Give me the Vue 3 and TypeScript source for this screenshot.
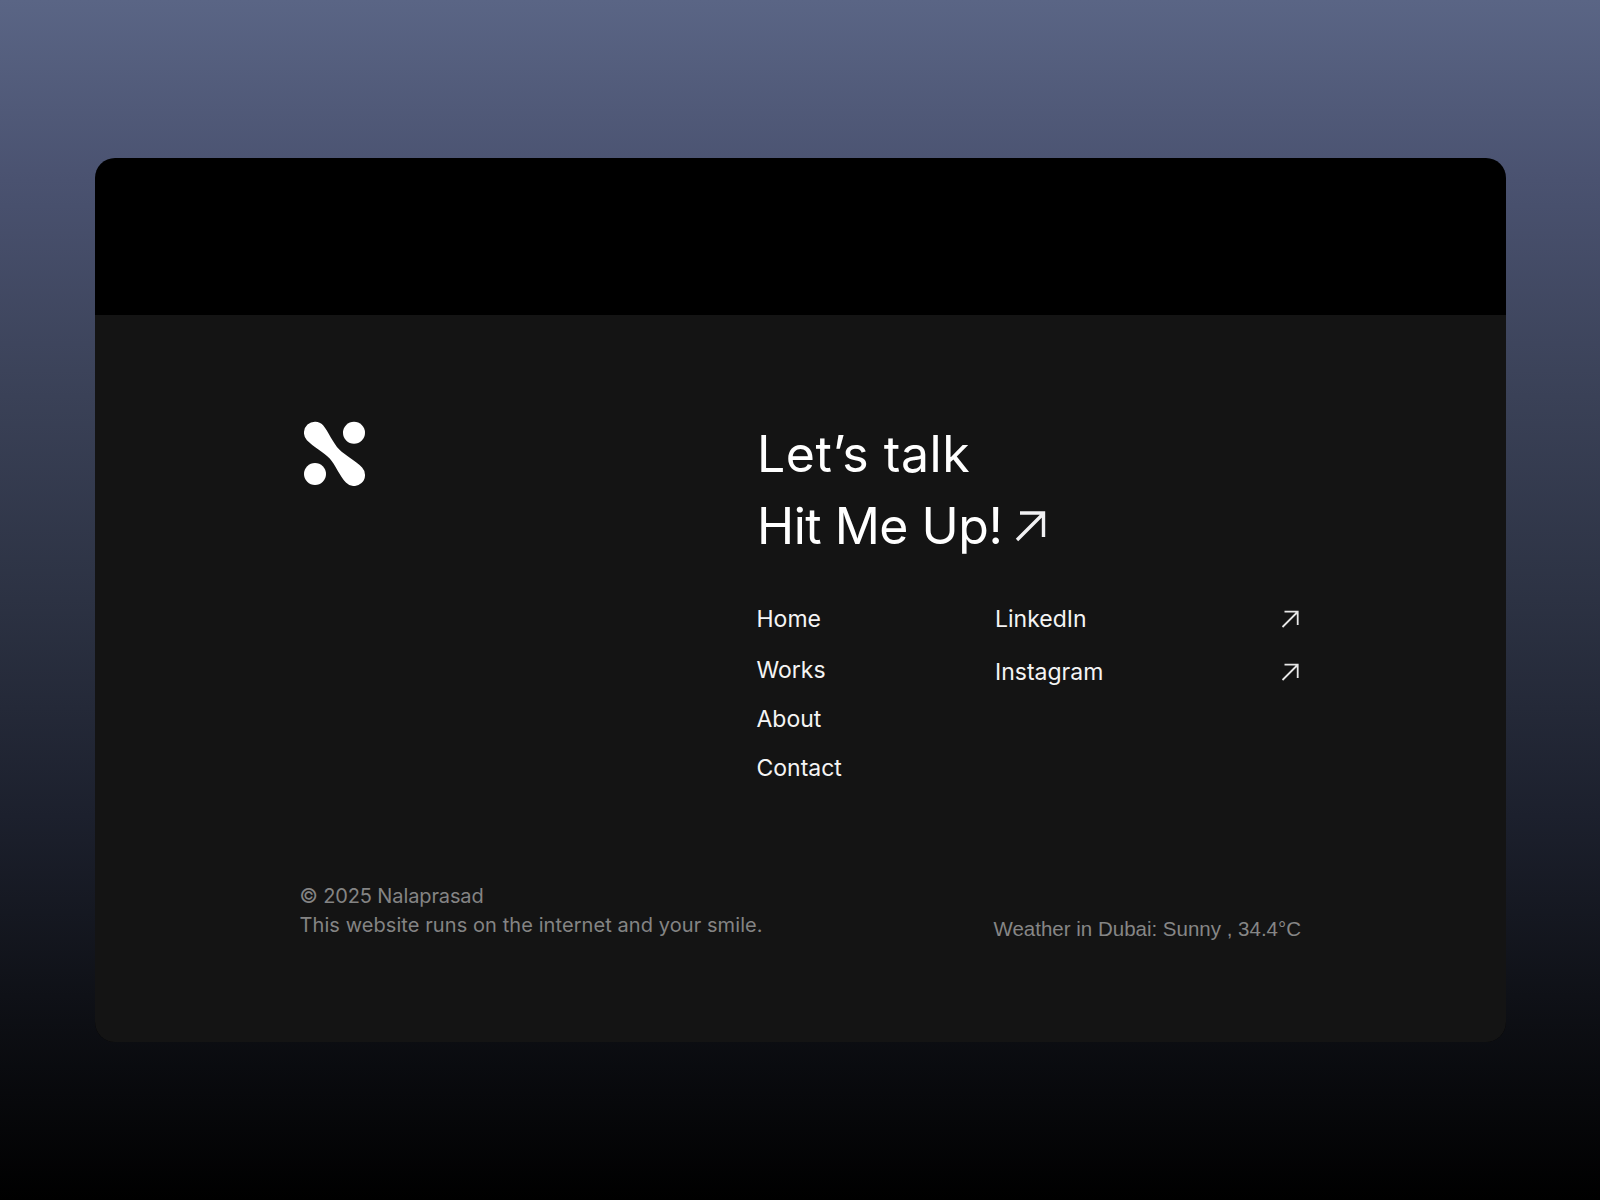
<script setup lang="ts">
const pages: string[] = ['Home', 'Works', 'About', 'Contact']
const socials: string[] = ['LinkedIn', 'Instagram']
</script>

<template>
  <div class="page">
    <div class="card">
      <div class="top"></div>
      <footer class="footer">
        <div class="main">
          <svg class="logo" viewBox="0 0 62 65" width="62" height="65">
            <circle cx="11" cy="53" r="11" fill="#fff" />
            <circle cx="50" cy="11.7" r="11" fill="#fff" />
            <path d="M19.1 4.2 C24 10 29 22 35.3 28.6 C41 34.5 52 40 58.1 46.5 A11 11 0 0 1 41.9 61.5 C36 55.5 31 43 25.7 37.4 C20 31.5 9 25.5 2.9 19.2 A11 11 0 0 1 19.1 4.2 Z" fill="#fff" />
          </svg>
          <div class="right">
            <h2 class="talk lets">Let’s talk</h2>
            <div class="talk hit">
              <span>Hit Me Up!</span>
              <svg class="big" viewBox="0 0 32 32" width="32" height="32">
                <path d="M3 30 L29 4 M6 3 H29.5 V27" stroke="#f1f1f3" stroke-width="3.4" fill="none" />
              </svg>
            </div>
            <div class="links">
              <nav class="pages">
                <a v-for="p in pages" :key="p">{{ p }}</a>
              </nav>
              <div class="socials">
                <a v-for="s in socials" :key="s" class="social">
                  <span>{{ s }}</span>
                  <svg class="small" viewBox="0 0 18 18" width="18" height="18">
                    <path d="M1.5 17 L16.5 2 M3.5 1.7 H16.7 V15" stroke="#e8e8e8" stroke-width="1.8" fill="none" />
                  </svg>
                </a>
              </div>
            </div>
          </div>
        </div>
        <div class="bottom">
          <p class="copy">
            <span class="line first">© 2025 Nalaprasad</span>
            <span class="line second">This website runs on the internet and your smile.</span>
          </p>
          <p class="weather">Weather in Dubai: Sunny , 34.4°C</p>
        </div>
      </footer>
    </div>
  </div>
</template>

<style>
html, body { margin: 0; background: #000; }
</style>

<style scoped>
.page {
  height: 1200px;
  box-sizing: border-box;
  padding: 158px 0 0 95px;
  background: linear-gradient(180deg, #5a6585 0%, #4a5270 15%, #3a4157 33%, #2c3243 50%, #1c202d 68%, #0f1117 83%, #000 100%);
  font-family: Inter, "Noto Sans", sans-serif;
}
.card {
  width: 1411px;
  height: 884px;
  border-radius: 20px;
  overflow: hidden;
  background: #000;
}
.top { height: 157px; }
.footer {
  height: 727px;
  box-sizing: border-box;
  padding: 106px 205px 0 205px;
  background: #141414;
}
.main { display: flex; }
.logo { margin-left: 4px; flex: none; }
.right { margin-left: 391px; width: 544px; margin-top: -3px; }
.talk {
  margin: 0;
  font-size: 50px;
  line-height: 72px;
  font-weight: 400;
  color: #fff;
  letter-spacing: -0.5px;
}
.lets { letter-spacing: 0.55px; }
.hit { display: flex; align-items: center; gap: 12px; }
.big { margin-top: -1px; }
.links { display: flex; margin-top: 43px; font-size: 23px; color: #f4f4f4; }
.pages { display: flex; flex-direction: column; width: 238.5px; gap: 20px; margin-left: -0.5px; }
.pages a { line-height: 29px; }
.pages a:first-child { margin-bottom: 2px; }
.socials { flex: 1; display: flex; flex-direction: column; gap: 24px; padding-right: 2px; }
.social { display: flex; justify-content: space-between; align-items: center; line-height: 29px; }
.small { margin-top: -2px; }
.bottom {
  display: flex;
  justify-content: space-between;
  align-items: flex-end;
  margin-top: 99px;
}
.copy { margin: 0 0 0 -0.5px; font-size: 20px; line-height: 29px; color: #848484; }
.line { display: block; }
.first { letter-spacing: -0.12px; }
.second { letter-spacing: 0.08px; }
.weather {
  margin: 0 0 -3px;
  font-family: "Liberation Sans", Arial, sans-serif;
  font-size: 20.5px;
  line-height: 29px;
  color: #868686;
}
</style>
